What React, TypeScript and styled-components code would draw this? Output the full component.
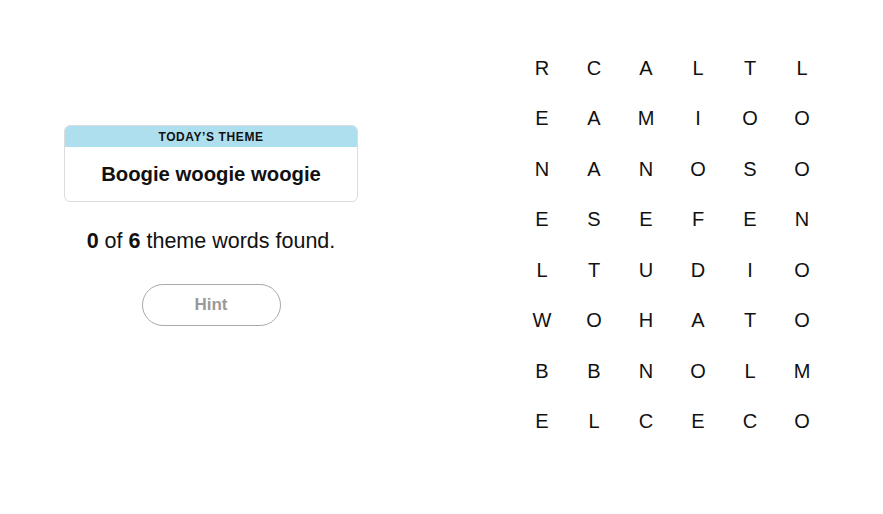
import React from "react";
import styled, { createGlobalStyle } from "styled-components";

const Global = createGlobalStyle`
  html, body { margin: 0; padding: 0; background: #fff; }
  body { font-family: "Liberation Sans", Arial, sans-serif; color: #000; }
`;

const Page = styled.div`
  display: flex;
  align-items: flex-start;
  padding: 43px 0 0 64px;
  gap: 158px;
  width: 883px;
  height: 514px;
  box-sizing: border-box;
`;

const LeftPanel = styled.div`
  width: 294px;
  padding-top: 82px;
  display: flex;
  flex-direction: column;
  align-items: center;
`;

const ThemeCard = styled.div`
  width: 100%;
  border: 1px solid #dcdcdc;
  border-radius: 6px;
  overflow: hidden;
  box-sizing: border-box;
`;

const ThemeHeader = styled.div`
  background: #aedfee;
  height: 21px;
  display: flex;
  align-items: center;
  justify-content: center;
  font-size: 12px;
  font-weight: 700;
  letter-spacing: 0.6px;
  color: #111;
`;

const ThemeTitle = styled.div`
  height: 54px;
  display: flex;
  align-items: center;
  justify-content: center;
  font-size: 20.3px;
  font-weight: 700;
  color: #111;
`;

const Found = styled.p`
  margin: 27px 0 0;
  font-size: 21.5px;
  line-height: 24px;
  color: #111;
  b { font-weight: 700; }
`;

const HintButton = styled.button`
  margin-top: 31px;
  width: 139px;
  height: 42px;
  border-radius: 21px;
  border: 1px solid #aaa;
  background: #fff;
  color: #999;
  font-family: inherit;
  font-size: 17px;
  font-weight: 700;
  cursor: pointer;
`;

const Grid = styled.div`
  display: grid;
  grid-template-columns: repeat(6, 52px);
  grid-auto-rows: 50.5px;
`;

const Letter = styled.div`
  display: flex;
  align-items: center;
  justify-content: center;
  font-size: 20px;
  color: #111;
`;

const rows = [
  "RCALTL",
  "EAMIOO",
  "NANOSO",
  "ESEFEN",
  "LTUDIO",
  "WOHATO",
  "BBNOLM",
  "ELCECO",
];

export default function App() {
  return (
    <>
      <Global />
      <Page>
        <LeftPanel>
          <ThemeCard>
            <ThemeHeader>TODAY’S THEME</ThemeHeader>
            <ThemeTitle>Boogie woogie woogie</ThemeTitle>
          </ThemeCard>
          <Found>
            <b>0</b> of <b>6</b> theme words found.
          </Found>
          <HintButton>Hint</HintButton>
        </LeftPanel>
        <Grid>
          {rows.flatMap((r, i) =>
            r.split("").map((c, j) => <Letter key={`${i}-${j}`}>{c}</Letter>)
          )}
        </Grid>
      </Page>
    </>
  );
}
